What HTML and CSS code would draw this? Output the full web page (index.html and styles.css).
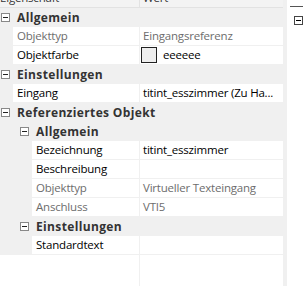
FILE: index.html
```html
<!DOCTYPE html>
<html lang="de">
<head>
    <meta charset="UTF-8">
    <title>Eigenschaften</title>
    <link rel="stylesheet" href="styles.css">
</head>
<body>
    <div class="window">
        <div class="grid">
            <!-- Spaltenkopf (halb verdeckt) -->
            <div class="head">
                <div class="head-inner">
                    <span class="head-name">Eigenschaft</span>
                    <span class="head-val">Wert</span>
                </div>
            </div>

            <div class="group"><span class="toggle"></span><span class="gtitle">Allgemein</span></div>
            <div class="row">
                <div class="gutter"></div>
                <div class="name off">Objekttyp</div>
                <div class="val off">Eingangsreferenz</div>
            </div>
            <div class="row">
                <div class="gutter"></div>
                <div class="name">Objektfarbe</div>
                <div class="val"><span class="swatch"></span>eeeeee</div>
            </div>

            <div class="group"><span class="toggle"></span><span class="gtitle">Einstellungen</span></div>
            <div class="row">
                <div class="gutter"></div>
                <div class="name">Eingang</div>
                <div class="val">titint_esszimmer (Zu Ha...</div>
            </div>

            <div class="group"><span class="toggle"></span><span class="gtitle">Referenziertes Objekt</span></div>
            <div class="group sub"><span class="toggle"></span><span class="gtitle">Allgemein</span></div>
            <div class="row sub">
                <div class="gutter"></div>
                <div class="name">Bezeichnung</div>
                <div class="val">titint_esszimmer</div>
            </div>
            <div class="row sub">
                <div class="gutter"></div>
                <div class="name">Beschreibung</div>
                <div class="val"></div>
            </div>
            <div class="row sub">
                <div class="gutter"></div>
                <div class="name off">Objekttyp</div>
                <div class="val off">Virtueller Texteingang</div>
            </div>
            <div class="row sub">
                <div class="gutter"></div>
                <div class="name off">Anschluss</div>
                <div class="val off">VTI5</div>
            </div>
            <div class="group sub"><span class="toggle"></span><span class="gtitle">Einstellungen</span></div>
            <div class="row sub">
                <div class="gutter"></div>
                <div class="name">Standardtext</div>
                <div class="val"></div>
            </div>

            <div class="filler"><div class="fill-left"></div></div>
        </div>

        <div class="side">
            <div class="side-line"></div>
            <span class="side-toggle"></span>
        </div>
    </div>
</body>
</html>
```

FILE: styles.css
```css
body {
    margin: 0;
    font-family: "Open Sans", "Liberation Sans", sans-serif;
    font-size: 11.5px;
    letter-spacing: -0.2px;
    color: #000;
    background: #fff;
}
.window {
    display: flex;
    width: 303px;
    height: 286px;
    overflow: hidden;
}
.grid {
    width: 283px;
    display: flex;
    flex-direction: column;
}
.head {
    height: 7px;
    overflow: hidden;
    background: #f3f3f3;
    border-bottom: 1px solid #e2e2e2;
    color: #333;
}
.head-inner {
    display: flex;
    margin-top: -11px;
    line-height: 18px;
}
.head-name {
    width: 139px;
    border-right: 1px solid #e2e2e2;
}
.head-val {
    padding-left: 3px;
}
.group {
    display: flex;
    align-items: center;
    height: 19px;
    background: #f0f0f0;
    font-size: 12px;
    font-weight: bold;
    letter-spacing: 0.35px;
    color: #333;
}
.toggle {
    position: relative;
    width: 7px;
    height: 7px;
    margin-left: 1px;
    border: 1px solid #888;
    background: #fff;
}
.toggle::after {
    content: "";
    position: absolute;
    left: 1px;
    top: 3px;
    width: 5px;
    height: 1px;
    background: #222;
}
.gtitle {
    margin-left: 7px;
}
.group.sub .toggle {
    margin-left: 20px;
}
.row {
    display: flex;
    height: 18px;
    line-height: 18px;
    border-bottom: 1px solid #f0f0f0;
}
.gutter {
    width: 13px;
    flex-shrink: 0;
    background: #f0f0f0;
}
.row.sub .gutter {
    width: 32px;
}
.name {
    flex: 1;
    padding-left: 4px;
    border-right: 1px solid #f0f0f0;
    white-space: nowrap;
}
.val {
    width: 140px;
    padding-left: 3px;
    white-space: nowrap;
    overflow: hidden;
    display: flex;
    align-items: center;
}
.off {
    color: #6d6d6d;
}
.swatch {
    width: 14px;
    height: 14px;
    margin-left: -2px;
    margin-right: 6px;
    border: 1px solid #222;
    background: #eeeeee;
}
.filler {
    flex: 1;
    display: flex;
}
.fill-left {
    width: 139px;
    border-right: 1px solid #f0f0f0;
}
.side {
    position: relative;
    width: 20px;
    background: #fff;
    border-left: 4px solid #f0f0f0;
    box-sizing: border-box;
}
.side-line {
    margin: 6px 0 0 3px;
    height: 1px;
    background: #555;
}
.side-toggle {
    position: absolute;
    left: 7px;
    top: 16px;
    width: 7px;
    height: 7px;
    border: 1px solid #444;
}
.side-toggle::after {
    content: "";
    position: absolute;
    left: 1px;
    top: 3px;
    width: 5px;
    height: 1px;
    background: #000;
}
```
